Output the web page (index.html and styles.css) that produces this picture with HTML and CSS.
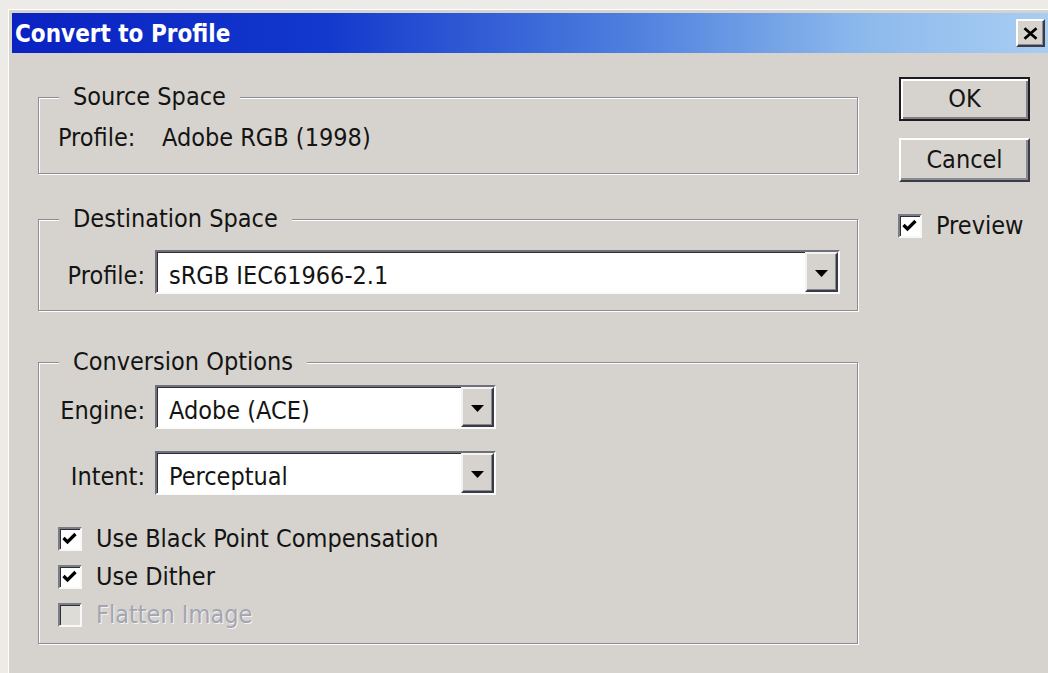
FILE: index.html
```html
<!DOCTYPE html>
<html lang="en">
<head>
<meta charset="utf-8">
<title>Convert to Profile</title>
<link rel="stylesheet" href="styles.css">
</head>
<body>
<div class="screen">
  <div class="window">
    <div class="titlebar">
      <span class="title">Convert to Profile</span>
      <button class="close" type="button" aria-label="Close">
        <svg width="15" height="13" viewBox="0 0 15 13"><path d="M1.5 1.2 L13.5 11.8 M13.5 1.2 L1.5 11.8" stroke="#000" stroke-width="2.8" fill="none"/></svg>
      </button>
    </div>

    <div class="body">
      <div class="main">
        <section class="group g-source">
          <div class="legend">Source Space</div>
          <div class="src-row">
            <span class="src-label">Profile:</span>
            <span>Adobe RGB (1998)</span>
          </div>
        </section>

        <section class="group g-dest">
          <div class="legend">Destination Space</div>
          <div class="field">
            <span class="field-label">Profile:</span>
            <div class="select wide">
              <span class="value">sRGB IEC61966-2.1</span>
              <span class="arrow"><svg width="13" height="7" viewBox="0 0 13 7"><polygon points="0,0 13,0 6.5,7" fill="#000"/></svg></span>
            </div>
          </div>
        </section>

        <section class="group g-conv">
          <div class="legend">Conversion Options</div>
          <div class="field">
            <span class="field-label">Engine:</span>
            <div class="select narrow">
              <span class="value">Adobe (ACE)</span>
              <span class="arrow"><svg width="13" height="7" viewBox="0 0 13 7"><polygon points="0,0 13,0 6.5,7" fill="#000"/></svg></span>
            </div>
          </div>
          <div class="field second">
            <span class="field-label">Intent:</span>
            <div class="select narrow">
              <span class="value">Perceptual</span>
              <span class="arrow"><svg width="13" height="7" viewBox="0 0 13 7"><polygon points="0,0 13,0 6.5,7" fill="#000"/></svg></span>
            </div>
          </div>
          <div class="checks">
            <div class="check-row">
              <span class="box"><svg width="20" height="20" viewBox="0 0 20 20"><polyline points="3.5,9 7.5,13 15.5,5" stroke="#000" stroke-width="3.2" fill="none"/></svg></span>
              <span>Use Black Point Compensation</span>
            </div>
            <div class="check-row">
              <span class="box"><svg width="20" height="20" viewBox="0 0 20 20"><polyline points="3.5,9 7.5,13 15.5,5" stroke="#000" stroke-width="3.2" fill="none"/></svg></span>
              <span>Use Dither</span>
            </div>
            <div class="check-row disabled">
              <span class="box"></span>
              <span>Flatten Image</span>
            </div>
          </div>
        </section>
      </div>

      <div class="side">
        <button class="btn default" type="button">OK</button>
        <button class="btn" type="button">Cancel</button>
        <div class="check-row preview">
          <span class="box"><svg width="20" height="20" viewBox="0 0 20 20"><polyline points="3.5,9 7.5,13 15.5,5" stroke="#000" stroke-width="3.2" fill="none"/></svg></span>
          <span>Preview</span>
        </div>
      </div>
    </div>
  </div>
</div>
</body>
</html>
```

FILE: styles.css
```css
html, body {
  margin: 0;
  padding: 0;
}

body {
  background: #ecebe8;
  font-family: "DejaVu Sans Condensed", "DejaVu Sans", sans-serif;
  font-size: 25px;
  color: #141414;
  overflow: hidden;
}

.screen {
  height: 673px;
  box-sizing: border-box;
  padding: 9px 0 0 8px;
}

/* dialog frame */
.window {
  height: 100%;
  box-sizing: border-box;
  border-top: 1px solid #fff;
  border-left: 1px solid #fff;
  padding: 3px 0 0 3px;
  background: #d6d3ce;
}

.titlebar {
  display: flex;
  align-items: flex-start;
  justify-content: space-between;
  height: 40px;
  box-sizing: border-box;
  padding: 0 3px 0 3px;
  background: linear-gradient(90deg, #0a22c2 0%, #1238cc 30%, #4f80de 60%, #8cb9ec 82%, #a8cdf2 100%);
}

.title {
  color: #fff;
  font-weight: bold;
  font-size: 24px;
  line-height: 37px;
  padding-top: 3px;
}

.close {
  align-self: center;
  width: 29px;
  height: 28px;
  margin: 0;
  padding: 0;
  display: flex;
  align-items: center;
  justify-content: center;
  background: #d6d3ce;
  border: 2px solid;
  border-color: #fff #3c3c44 #3c3c44 #fff;
  box-shadow: inset -1px -1px 0 #8a8a92;
}

/* content */
.body {
  display: flex;
  padding-left: 26px;
}

.main {
  width: 820px;
  flex: none;
  padding-top: 44px;
}

.side {
  width: 131px;
  flex: none;
  margin-left: 41px;
  padding-top: 24px;
  display: flex;
  flex-direction: column;
}

/* etched group boxes */
.group {
  position: relative;
  border: 1px solid #8a8c96;
  box-shadow: 1px 1px 0 #fff, inset 1px 1px 0 #fff;
  padding: 0 17px 0 19px;
}

.legend {
  position: absolute;
  top: -16px;
  left: 20px;
  padding: 0 14px;
  line-height: 30px;
  background: #d6d3ce;
}

.g-source {
  padding-top: 25px;
  padding-bottom: 20px;
}

.src-row {
  display: flex;
  line-height: 30px;
}

.src-label {
  width: 104px;
}

.g-dest {
  margin-top: 45px;
  padding-top: 30px;
  padding-bottom: 16px;
}

.g-conv {
  margin-top: 51px;
  padding-top: 22px;
  padding-bottom: 9px;
}

.field {
  display: flex;
  align-items: flex-start;
  height: 44px;
}

.field.second {
  margin-top: 22px;
}

.field-label {
  width: 87px;
  margin-right: 10px;
  text-align: right;
  line-height: 36px;
  padding-top: 8px;
}

/* combo boxes */
.select {
  display: flex;
  height: 44px;
  box-sizing: border-box;
  border: 2px solid;
  border-color: #6e707c #fbfbfb #fbfbfb #6e707c;
  box-shadow: inset 1px 1px 0 #2e2f36;
  background: #fff;
}

.select.wide {
  width: 685px;
}

.select.narrow {
  width: 341px;
}

.select .value {
  flex: 1;
  padding: 6px 0 0 12px;
  line-height: 36px;
}

.select .arrow {
  width: 33px;
  box-sizing: border-box;
  display: flex;
  align-items: center;
  justify-content: center;
  background: #d6d3ce;
  border: 2px solid;
  border-color: #f4f3f0 #3a3b44 #3a3b44 #f4f3f0;
  box-shadow: inset -1px -1px 0 #858791;
  padding-top: 2px;
}

/* check boxes */
.checks {
  margin-top: 25px;
}

.check-row {
  display: flex;
  align-items: center;
  height: 38px;
  line-height: 38px;
}

.box {
  width: 24px;
  height: 24px;
  box-sizing: border-box;
  flex: none;
  margin-right: 14px;
  display: flex;
  align-items: center;
  justify-content: center;
  background: #fff;
  border: 2px solid;
  border-color: #7a7c86 #f8f8f8 #f8f8f8 #7a7c86;
  box-shadow: inset 1px 1px 0 #2e2f36;
}

.check-row.disabled {
  color: #a3a5b2;
  text-shadow: 1px 1px 0 #f4f3f0;
}

.check-row.disabled .box {
  background: #dedcd7;
}

/* push buttons */
.btn {
  height: 44px;
  margin: 0;
  padding: 0;
  box-sizing: border-box;
  font: inherit;
  color: #141414;
  line-height: 38px;
  text-align: center;
  background: #d6d3ce;
  border: 2px solid;
  border-color: #fff #3c3c44 #3c3c44 #fff;
  box-shadow: inset -2px -2px 0 #8a8a92;
}

.btn.default {
  border-color: #1c1c22;
  box-shadow: inset 2px 2px 0 #fff, inset -2px -2px 0 #808088;
}

.btn + .btn {
  margin-top: 17px;
}

.check-row.preview {
  margin-top: 30px;
  margin-left: -1px;
  height: 28px;
}
```
